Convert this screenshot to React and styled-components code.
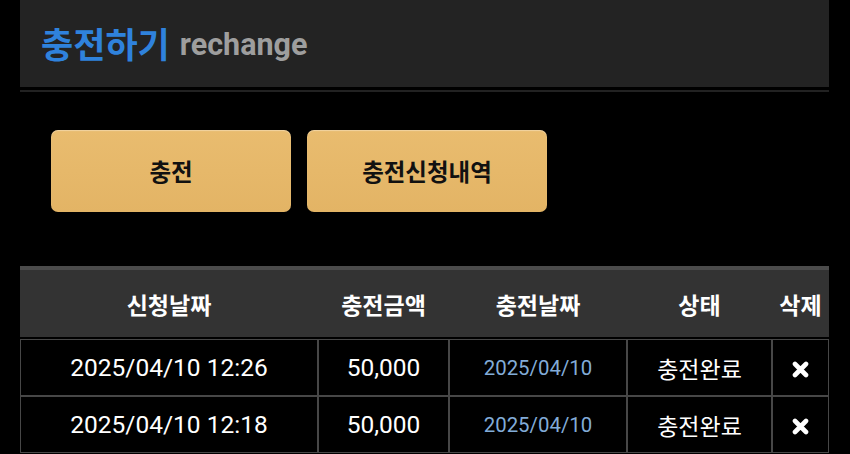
import styled, { createGlobalStyle } from 'styled-components';

const GlobalStyle = createGlobalStyle`
  html, body {
    margin: 0;
    padding: 0;
    background: #000;
  }
  body {
    font-family: Roboto, "Noto Sans CJK KR", sans-serif;
    color: #fff;
  }
`;

const Page = styled.div`
  width: 850px;
  min-height: 454px;
  padding: 0 21px 0 20px;
  box-sizing: border-box;
  background: #000;
`;

const TitleBar = styled.div`
  height: 87px;
  background: #232323;
  display: flex;
  align-items: center;
  gap: 10px;
  padding: 0 0 2px 21px;
  box-sizing: border-box;
`;

const TitleKo = styled.h1`
  margin: 0;
  font-family: "Noto Sans CJK KR", sans-serif;
  font-size: 35px;
  font-weight: 700;
  color: #2f82dc;
`;

const TitleEn = styled.span`
  font-family: Roboto, sans-serif;
  font-size: 30.5px;
  font-weight: 700;
  color: #9e9e9e;
  margin-top: 4px;
`;

const Divider = styled.div`
  height: 2px;
  margin-top: 3px;
  background: #222;
`;

const ButtonRow = styled.div`
  display: flex;
  gap: 16px;
  padding: 38px 0 0 31px;
`;

const ActionButton = styled.button`
  width: 240px;
  height: 82px;
  border: none;
  border-radius: 7px;
  background: linear-gradient(#e9bc6f, #e3b465);
  box-shadow: inset 0 1px 1px rgba(255, 255, 255, 0.35), 0 2px 2px rgba(0, 0, 0, 0.6);
  font-family: "Noto Sans CJK KR", sans-serif;
  font-size: 23.5px;
  font-weight: 700;
  color: #111;
  cursor: pointer;
`;

const Table = styled.table`
  margin-top: 54px;
  width: 809px;
  table-layout: fixed;
  border-collapse: separate;
  border-spacing: 0;
`;

const HeadCell = styled.th`
  height: 73px;
  box-sizing: border-box;
  padding: 0;
  background: #333;
  border-top: 4px solid #4b4b4b;
  border-bottom: 2px solid #000;
  font-family: "Noto Sans CJK KR", sans-serif;
  font-size: 23px;
  font-weight: 700;
  color: #fff;
  text-align: center;
`;

const Cell = styled.td`
  height: 57px;
  box-sizing: border-box;
  padding: 0;
  border: 1px solid #474747;
  background: #000;
  text-align: center;
  font-family: Roboto, "Noto Sans CJK KR", sans-serif;
  font-size: ${(p) => (p.$small ? '20.4px' : '24.5px')};
  color: ${(p) => (p.$small ? '#82acd8' : '#fff')};
`;

const StatusText = styled.span`
  font-family: "Noto Sans CJK KR", sans-serif;
  font-size: 23px;
`;

const DeleteIcon = () => (
  <svg width="17" height="17" viewBox="0 0 17 17" style={{ verticalAlign: 'middle' }}>
    <path d="M3 3 L14 14 M14 3 L3 14" stroke="#fff" strokeWidth="4.6" strokeLinecap="round" />
  </svg>
);

const rows = [
  { applied: '2025/04/10 12:26', amount: '50,000', date: '2025/04/10', status: '충전완료' },
  { applied: '2025/04/10 12:18', amount: '50,000', date: '2025/04/10', status: '충전완료' },
];

export default function App() {
  return (
    <Page>
      <GlobalStyle />
      <TitleBar>
        <TitleKo>충전하기</TitleKo>
        <TitleEn>rechange</TitleEn>
      </TitleBar>
      <Divider />
      <ButtonRow>
        <ActionButton>충전</ActionButton>
        <ActionButton>충전신청내역</ActionButton>
      </ButtonRow>
      <Table>
        <colgroup>
          <col style={{ width: 298 }} />
          <col style={{ width: 131 }} />
          <col style={{ width: 178 }} />
          <col style={{ width: 145 }} />
          <col style={{ width: 57 }} />
        </colgroup>
        <thead>
          <tr>
            <HeadCell>신청날짜</HeadCell>
            <HeadCell>충전금액</HeadCell>
            <HeadCell>충전날짜</HeadCell>
            <HeadCell>상태</HeadCell>
            <HeadCell>삭제</HeadCell>
          </tr>
        </thead>
        <tbody>
          {rows.map((r, i) => (
            <tr key={i}>
              <Cell>{r.applied}</Cell>
              <Cell>{r.amount}</Cell>
              <Cell $small>{r.date}</Cell>
              <Cell><StatusText>{r.status}</StatusText></Cell>
              <Cell><DeleteIcon /></Cell>
            </tr>
          ))}
        </tbody>
      </Table>
    </Page>
  );
}
